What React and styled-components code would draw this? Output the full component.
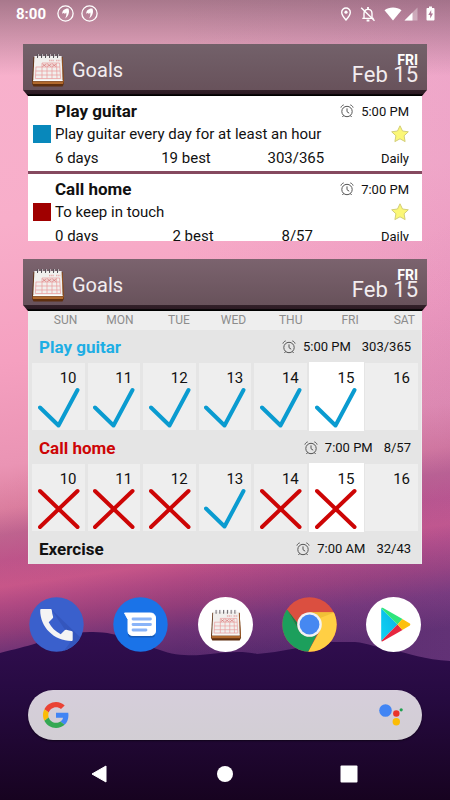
import styled, { createGlobalStyle } from 'styled-components';

const GlobalStyle = createGlobalStyle`
    * { box-sizing: border-box; }
    body {
        margin: 0;
        font-family: Roboto, sans-serif;
        color: #111;
    }
    button {
        border: 0;
        padding: 0;
        background: none;
        display: flex;
        cursor: pointer;
    }
    svg { display: block; flex: none; }
`;

const Screen = styled.div`
    position: relative;
    z-index: 0;
    display: flex;
    flex-direction: column;
    min-height: 100vh;
    overflow: hidden;
    background:
        linear-gradient(to bottom, rgba(60, 40, 50, 0.42) 0, rgba(60, 40, 50, 0) 76px),
        linear-gradient(150deg, rgba(130, 50, 140, 0) 45%, rgba(120, 40, 130, 0.12) 75%),
        linear-gradient(to right, rgba(190, 120, 190, 0) 40%, rgba(190, 120, 190, 0.16) 100%),
        linear-gradient(172deg, #f7b2cd 0%, #f8aeca 26%, #f5a0c0 42%, #ea94b4 54%, #dc7f9f 59%, #c0648f 62%, #c0568a 65%, #cb5889 68%, #b54c83 70%, #953f79 73%, #6c3374 76%, #4d2666 80%);
`;

const Hills = styled.svg`
    position: absolute;
    z-index: -1;
    left: 0;
    bottom: 0;
    width: 100%;
    height: 200px;
`;

const StatusBar = styled.header`
    display: flex;
    align-items: center;
    justify-content: space-between;
    height: 27px;
    padding: 0 15px 0 16px;
    color: white;
    font-size: 15px;
    font-weight: 700;
`;

const StatusGroup = styled.div`
    display: flex;
    align-items: center;
    gap: ${props => props.gap || "8px"};
`;

const Widgets = styled.main`
    display: flex;
    flex-direction: column;
    gap: 18px;
    padding: 17px 23px 0;
`;

const WidgetTop = styled.div`
    display: flex;
    align-items: center;
    height: 46px;
    padding: 6px 9px 0 8px;
    color: #f2ecef;
    background: linear-gradient(to bottom, ${props => props.shade || "#73616a"}, #68525b);
`;

const WidgetEdge = styled.div`
    height: 6px;
    background: linear-gradient(to bottom, #33212a 0, #2d1b24 60%, #000 80%);
    clip-path: polygon(0 0, 100% 0, calc(100% - 5px) 100%, 5px 100%);
`;

const WidgetTitle = styled.h2`
    flex: 1;
    margin: 0 0 0 7px;
    font-size: 20px;
    font-weight: 400;
    line-height: 24px;
`;

const Today = styled.div`
    display: flex;
    flex-direction: column;
    align-items: flex-end;
    padding-bottom: 2px;
    font-size: 22px;
    line-height: 18px;
`;

const Weekday = styled.strong`
    font-size: 14px;
    line-height: 12px;
    color: white;
`;

const GoalList = styled.ul`
    height: 145px;
    margin: 0 5px;
    padding: 0;
    overflow: hidden;
    list-style: none;
    background: white;
`;

const Goal = styled.li`
    display: grid;
    grid-template-columns: 18px 1fr auto;
    grid-template-rows: 24px 22px 26px;
    column-gap: 4px;
    align-items: center;
    height: 78px;
    padding: 3px 13px 0 5px;
    border-bottom: 3px solid #85495f;
`;

const GoalName = styled.h3`
    grid-column: 2;
    margin: 0;
    font-size: 17px;
    font-weight: 700;
    line-height: 24px;
`;

const Swatch = styled.span`
    grid-column: 1;
    width: 18px;
    height: 18px;
    background: ${props => props.color};
`;

const Note = styled.span`
    font-size: 15px;
    line-height: 20px;
    white-space: nowrap;
`;

const StarCell = styled.span`
    justify-self: end;
`;

const Reminder = styled.span`
    display: flex;
    align-items: center;
    gap: 7px;
    font-size: 13px;
    font-weight: 400;
    color: #111;
`;

const Stats = styled.div`
    grid-column: 2 / 4;
    display: flex;
    align-items: baseline;
    justify-content: space-between;
    font-size: 15px;
`;

const Streak = styled.span`
    margin-right: 6px;
`;

const Repeat = styled.span`
    font-size: 13px;
`;

const CalendarBox = styled.div`
    margin: 0 5px;
    background: #e5e5e5;
`;

const DayNames = styled.div`
    display: grid;
    grid-template-columns: repeat(7, 1fr);
    height: 19px;
    line-height: 18px;
    background: #eeeeee;
`;

const DayName = styled.span`
    padding-right: 7px;
    text-align: right;
    font-size: 12px;
    color: #8c8c8c;
`;

const CalendarBody = styled.div`
    padding: 0 1px 0 2px;
    border: solid #ededed;
    border-width: 0 1px;
`;

const Calendar = styled.table`
    width: 100%;
    border-collapse: collapse;
    table-layout: fixed;
`;

const GroupHead = styled.th`
    height: 32px;
    padding: 2px 9px 0 8px;
    text-align: left;
    font-weight: 700;
    color: ${props => props.color};
`;

const GroupLine = styled.div`
    display: flex;
    align-items: center;
    justify-content: space-between;
    font-size: 17px;
    line-height: 24px;
`;

const GroupMeta = styled.span`
    display: flex;
    align-items: center;
    gap: 11px;
    font-size: 13px;
    font-weight: 400;
    color: #111;
`;

const Day = styled.td`
    height: 69px;
    padding: ${props => props.$today ? "0" : "1px"};
`;

const DayBox = styled.div`
    display: flex;
    flex-direction: column;
    align-items: flex-end;
    height: ${props => props.$today ? "69px" : "67px"};
    padding: ${props => props.$today ? "7px 7px 0 0" : "6px 5px 0 0"};
    font-size: 15px;
    line-height: 18px;
    background: ${props => props.$today ? "white" : "#eeeeee"};
    border: solid #e5e5e5;
    border-width: ${props => props.$today ? "0" : "0 1px 0 0"};
`;

const DayNumber = styled.span`
    padding-right: 3px;
`;

const Dock = styled.nav`
    display: flex;
    justify-content: space-between;
    padding: 33px 29px 0;
`;

const SearchBar = styled.form`
    display: flex;
    align-items: center;
    height: 50px;
    margin: 38px 28px 0;
    padding: 0 18px 0 15px;
    border-radius: 25px;
    background: linear-gradient(to bottom, #d6cedb, #d2ced4);
    box-shadow: 0 1px 2px rgba(0, 0, 0, 0.5);
`;

const SearchInput = styled.input`
    flex: 1;
    min-width: 0;
    border: 0;
    outline: 0;
    background: none;
    font: 16px Roboto, sans-serif;
`;

const NavBar = styled.nav`
    display: flex;
    align-items: center;
    justify-content: space-between;
    padding: 25px 92px 16px 91px;
`;

function QuillIcon() {
    return (
        <svg width="17" height="17" viewBox="0 0 17 17">
            <circle cx="8.5" cy="8.5" r="7.6" fill="none" stroke="white" strokeWidth="1.3" />
            <path d="M5.300 8.800C4.900 5.600 7.800 3.200 11.400 3.500 12.800 6.600 12 10.700 8 13.500 9.300 11.200 9.700 9.100 9.200 7.400L7.700 9.200 7.200 7.700z" fill="white" />
        </svg>
    );
}

function PinIcon() {
    return (
        <svg width="12" height="14" viewBox="0 0 12 14">
            <path d="M6 1a4.300 4.300 0 0 0-4.300 4.300C1.700 8.400 6 13 6 13s4.300-4.600 4.300-7.700A4.300 4.300 0 0 0 6 1z" fill="none" stroke="white" strokeWidth="1.4" />
            <circle cx="6" cy="5.2" r="1.6" fill="white" />
        </svg>
    );
}

function BellOffIcon() {
    return (
        <svg width="16" height="16" viewBox="0 0 16 16" fill="none" stroke="white" strokeWidth="1.4">
            <path d="M4 12.300V7.500C4 5 5.500 3.400 8 3.400s4 1.600 4 4.100v4.800M2.300 12.400h11.400" />
            <path d="M8 1v2M6.600 14.500h2.800" strokeWidth="1.8" />
            <path d="M1.200 1.800l13.300 13" />
        </svg>
    );
}

function WifiIcon() {
    return (
        <svg width="18" height="14" viewBox="0 0 18 14">
            <path d="M9 13.500L.5 3.200C2.800 1.400 5.800.5 9 .5s6.200.9 8.500 2.700z" fill="white" />
        </svg>
    );
}

function SignalIcon() {
    return (
        <svg width="14" height="14" viewBox="0 0 14 14">
            <path d="M13.500.5v13H.5z" fill="rgba(255,255,255,.35)" />
            <path d="M8.500 5.500v8h-8z" fill="white" />
        </svg>
    );
}

function BatteryIcon() {
    return (
        <svg width="9" height="15" viewBox="0 0 9 15">
            <path d="M3 .5h3v1.500h1.500c.5 0 1 .4 1 1V13.500c0 .5-.4 1-1 1h-6c-.6 0-1-.5-1-1V3c0-.6.500-1 1-1H3z" fill="white" />
            <path d="M5.200 4L2.300 9h1.900v3.500L7 7.400H5.200z" fill="#b07896" />
        </svg>
    );
}

function CalendarIcon({ size }) {
    return (
        <svg width={size} height={size} viewBox="0 0 34 34">
            <path d="M2.500 4H31.500L33 30.500 31.500 33.500H2.500L1 30.500z" fill="#5e2f10" />
            <path d="M1.500 28.500h31l-.3 2.500H1.800z" fill="#b0692e" />
            <path d="M30.500 4.500h1l1.300 24.500h-1z" fill="#9c5722" />
            <path d="M3.400 3h27.200L31.600 28H2.200z" fill="#f1efed" />
            <path d="M2.200 27.600h29.300" stroke="#fff" strokeWidth="1" />
            <g stroke="#ea9a9a" strokeWidth=".7" fill="none">
                <path d="M4.800 14h24M4.600 18h24.500M4.400 22h25M4.400 25.500h25.200M5 14L4.400 25.500M11 10v15.500M16 10v15.500M21 10v15.500M25.500 10L26 25.500M28.600 10l1 15.500M11 10h17.600" />
            </g>
            <path d="M11.500 11l3.500 2.500m0-2.500l-3.500 2.500m5-2.500l3.500 2.500m0-2.500l-3.500 2.500m5-2.500l3.500 2.500m0-2.500l-3.500 2.500" stroke="#d87878" strokeWidth=".8" />
            <path d="M18 7.500h5m2 0h4.500" stroke="#e6b0b0" strokeWidth="1.500" strokeDasharray="1.500 .6" />
            <path d="M6.500 1v4M10.500 1v4M14.500 1v4M18.500 1v4M22.500 1v4M26.500 1v4" stroke="#555157" strokeWidth="1" />
            <path d="M7.500 1v3M11.500 1v3M15.500 1v3M19.500 1v3M23.500 1v3M27.500 1v3" stroke="#d8d2d6" strokeWidth=".7" />
        </svg>
    );
}

function AlarmIcon() {
    return (
        <svg width="14" height="14" viewBox="0 0 14 14" fill="none" stroke="#555" strokeWidth="1">
            <circle cx="7" cy="7.500" r="5.200" />
            <path d="M7 4.400v3.300l2.200 1.500M.9 3.600C1.300 2.300 2.300 1.300 3.700.9M13.100 3.600C12.700 2.300 11.700 1.300 10.300.9M3.500 11.500l-1 1.500M10.500 11.500l1 1.500" />
        </svg>
    );
}

function StarIcon() {
    return (
        <svg width="18" height="18" viewBox="0 0 18 18">
            <path d="M9 .8l2.500 5.200 5.800.8-4.200 4 1 5.800L9 13.800l-5.100 2.800 1-5.800-4.200-4 5.800-.8z" fill="#fbf777" stroke="#d3ce78" strokeWidth="1" strokeLinejoin="round" />
        </svg>
    );
}

function Mark({ type }) {
    const done = type === "done";
    return (
        <svg width="42" height="42" viewBox="0 0 42 42" fill="none" stroke={done ? "#0a9bd0" : "#cd0505"} strokeWidth="4" strokeLinecap="round" strokeLinejoin="round">
            <path d={done ? "M2 20.500L20.500 38.500 39.500 3" : "M2 3L39.500 39M39.500 3L2 39"} />
        </svg>
    );
}

function PhoneIcon() {
    return (
        <svg width="55" height="55" viewBox="0 0 55 55">
            <defs>
                <clipPath id="phoneClip"><circle cx="27.500" cy="27.500" r="27.200" /></clipPath>
            </defs>
            <circle cx="27.500" cy="27.500" r="27.200" fill="#3a60cc" />
            <path d="M22 12l33 32v11H34L43 43z" fill="#3456bd" clipPath="url(#phoneClip)" />
            <path d="M12.500 12h9c.7 0 1.200.5 1.300 1.200.2 2.300.6 4.500 1.300 6.500.2.600 0 1.200-.4 1.600l-4 4c2.900 5.500 6.500 9 12 11.900l4-4c.4-.4 1-.6 1.600-.4 2 .7 3.600 1 5.200 1.200.7.100 1.200.6 1.200 1.300v7.400c0 .8-.5 1.300-1.200 1.300C25 44 11 30 11.200 13.300c0-.8.5-1.300 1.300-1.300z" fill="#f4f4f4" />
        </svg>
    );
}

function MessagesIcon() {
    return (
        <svg width="55" height="55" viewBox="0 0 55 55">
            <circle cx="27.500" cy="27.500" r="27.200" fill="#1a73e8" />
            <path d="M15 37c0 2 1 3.500 3 3.500h21c2 0 3-1 3-4z" fill="#155bb9" />
            <path d="M11.500 16h26c3 0 5 2 5 5v13c0 3-2 4.500-5 4.500H20c-3 0-5-1.500-5-4.500V22.500z" fill="white" stroke="white" strokeLinejoin="round" />
            <path d="M20 22h17.500M20 27.500h17.500M20 33h13" stroke="#8ab4f8" strokeWidth="2.800" strokeLinecap="round" />
        </svg>
    );
}

function GoalsIcon() {
    return (
        <svg width="55" height="55" viewBox="0 0 55 55">
            <circle cx="27.500" cy="27.500" r="27.500" fill="white" />
            <g transform="translate(12 12)"><CalendarIcon size={32} /></g>
        </svg>
    );
}

function ChromeIcon() {
    return (
        <svg width="55" height="55" viewBox="0 0 55 55">
            <defs>
                <clipPath id="chromeClip"><circle cx="27.500" cy="27.500" r="27.200" /></clipPath>
            </defs>
            <g clipPath="url(#chromeClip)">
                <rect width="55" height="55" fill="#db4f40" />
                <path d="M27.500 15.200H55V55H26L38 33.500z" fill="#ffcf44" />
                <path d="M5.500 13L17 33.600c2.200 3.600 6 6 10.500 6 3.500 0 6-1.400 8-3.200L26 55H0V13z" fill="#1c9f5c" />
                <path d="M5.500 13L17 33.500 15.500 26z" fill="#12854a" />
                <path d="M27.500 15.200H53L38 21z" fill="#e8b52f" opacity=".6" />
            </g>
            <circle cx="27.500" cy="27.500" r="12.300" fill="#f3f3f3" />
            <circle cx="27.500" cy="27.500" r="9.900" fill="#4688f1" />
        </svg>
    );
}

function PlayIcon() {
    return (
        <svg width="55" height="55" viewBox="0 0 55 55">
            <defs>
                <linearGradient id="playBlue" x1="0" y1="1" x2="1" y2="0">
                    <stop offset="0" stopColor="#10d3f5" />
                    <stop offset="1" stopColor="#08b2e3" />
                </linearGradient>
            </defs>
            <circle cx="27.500" cy="27.500" r="27.500" fill="white" />
            <path d="M15.200 11.200L31.500 27.500 15.200 44z" fill="url(#playBlue)" />
            <path d="M15.200 11.200c.6-.7 1.300-.5 2-.1L36.500 22l-5 5.500z" fill="#2ee57c" />
            <path d="M15.200 44c.6.700 1.300.500 2 .1L36.500 33l-5-5.500z" fill="#e6273f" />
            <path d="M36.300 22l7.200 4.300c1.100.7 1.100 1.700 0 2.400L36.300 33l-4.800-5.500z" fill="#fdc00d" />
        </svg>
    );
}

function GoogleIcon() {
    return (
        <svg width="26" height="26" viewBox="0 0 48 48">
            <path fill="#EA4335" d="M24 9.500c3.540 0 6.710 1.220 9.210 3.600l6.850-6.850C35.900 2.380 30.470 0 24 0 14.620 0 6.510 5.380 2.560 13.220l7.980 6.190C12.430 13.720 17.740 9.500 24 9.500z" />
            <path fill="#4285F4" d="M46.980 24.550c0-1.570-.15-3.090-.38-4.550H24v9.020h12.940c-.58 2.960-2.260 5.480-4.780 7.180l7.730 6c4.510-4.180 7.090-10.360 7.090-17.650z" />
            <path fill="#FBBC05" d="M10.530 28.590c-.48-1.450-.76-2.990-.76-4.590s.27-3.140.76-4.590l-7.980-6.190C.92 16.460 0 20.120 0 24c0 3.880.92 7.540 2.560 10.780l7.970-6.190z" />
            <path fill="#34A853" d="M24 48c6.480 0 11.930-2.130 15.890-5.810l-7.730-6c-2.150 1.450-4.920 2.300-8.160 2.300-6.260 0-11.570-4.220-13.470-9.910l-7.980 6.190C6.510 42.620 14.620 48 24 48z" />
        </svg>
    );
}

function AssistantIcon() {
    return (
        <svg width="26" height="26" viewBox="0 0 26 26">
            <circle cx="7.500" cy="8.500" r="6.300" fill="#4285f4" />
            <circle cx="18.300" cy="11.500" r="3.200" fill="#ea3329" />
            <circle cx="23.200" cy="7.800" r="1.600" fill="#1fa050" />
            <circle cx="18.300" cy="19.700" r="3.700" fill="#fbbc05" />
        </svg>
    );
}

const days = ["SUN", "MON", "TUE", "WED", "THU", "FRI", "SAT"];

const goals = [
    { name: "Play guitar", note: "Play guitar every day for at least an hour", color: "#0888bb", time: "5:00 PM", streak: "6 days", best: "19 best", total: "303/365" },
    { name: "Call home", note: "To keep in touch", color: "#a00000", time: "7:00 PM", streak: "0 days", best: "2 best", total: "8/57" },
];

const groups = [
    { name: "Play guitar", color: "#1eaee4", time: "5:00 PM", total: "303/365", marks: ["done", "done", "done", "done", "done", "done", null] },
    { name: "Call home", color: "#cd0505", time: "7:00 PM", total: "8/57", marks: ["missed", "missed", "missed", "done", "missed", "missed", null] },
    { name: "Exercise", color: "#111", time: "7:00 AM", total: "32/43", marks: null },
];

const apps = [
    { name: "Phone", Icon: PhoneIcon },
    { name: "Messages", Icon: MessagesIcon },
    { name: "Goals", Icon: GoalsIcon },
    { name: "Chrome", Icon: ChromeIcon },
    { name: "Play Store", Icon: PlayIcon },
];

function Widget({ shade, children }) {
    return (
        <section>
            <WidgetTop shade={shade}>
                <CalendarIcon size={34} />
                <WidgetTitle>Goals</WidgetTitle>
                <Today>
                    <Weekday>FRI</Weekday>
                    <span>Feb 15</span>
                </Today>
            </WidgetTop>
            <WidgetEdge />
            {children}
        </section>
    );
}

function GoalRow({ goal }) {
    return (
        <Goal>
            <GoalName>{goal.name}</GoalName>
            <Reminder><AlarmIcon />{goal.time}</Reminder>
            <Swatch color={goal.color} />
            <Note>{goal.note}</Note>
            <StarCell><StarIcon /></StarCell>
            <Stats>
                <Streak>{goal.streak}</Streak>
                <span>{goal.best}</span>
                <span>{goal.total}</span>
                <Repeat>Daily</Repeat>
            </Stats>
        </Goal>
    );
}

function CalendarGroup({ group }) {
    return (
        <tbody>
            <tr>
                <GroupHead colSpan={7} color={group.color}>
                    <GroupLine>
                        {group.name}
                        <GroupMeta>
                            <Reminder><AlarmIcon />{group.time}</Reminder>
                            <span>{group.total}</span>
                        </GroupMeta>
                    </GroupLine>
                </GroupHead>
            </tr>
            {group.marks && (
                <tr>
                    {group.marks.map((mark, i) => (
                        <Day key={i} $today={i === 5}>
                            <DayBox $today={i === 5}>
                                <DayNumber>{10 + i}</DayNumber>
                                {mark && <Mark type={mark} />}
                            </DayBox>
                        </Day>
                    ))}
                </tr>
            )}
        </tbody>
    );
}

export default function App() {
    return (
        <Screen>
            <GlobalStyle />
            <Hills viewBox="0 0 450 200" preserveAspectRatio="none">
                <defs>
                    <linearGradient id="hill" x1="0" y1="0" x2="0" y2="1">
                        <stop offset="0" stopColor="#310e50" />
                        <stop offset=".4" stopColor="#260a40" />
                        <stop offset="1" stopColor="#170320" />
                    </linearGradient>
                </defs>
                <path d="M0 53C15 49 25 47 37 43C55 38 72 32 90 32C118 31 138 43 160 50C172 55 190 56 200 55C222 53 240 50 257 54C270 53 280 51 292 49C310 46 320 42 332 42H355C368 43 378 48 392 50C408 53 425 60 450 61V200H0z" fill="url(#hill)" />
                <path d="M132 110C150 107 170 102 184 98C170 105 150 109 132 110z" fill="#3d1757" />
            </Hills>
            <StatusBar>
                <StatusGroup gap="11px">
                    8:00
                    <StatusGroup gap="7px"><QuillIcon /><QuillIcon /></StatusGroup>
                </StatusGroup>
                <StatusGroup>
                    <PinIcon />
                    <BellOffIcon />
                    <StatusGroup gap="2px"><WifiIcon /><SignalIcon /></StatusGroup>
                    <BatteryIcon />
                </StatusGroup>
            </StatusBar>
            <Widgets>
                <Widget>
                    <GoalList>
                        {goals.map(goal => <GoalRow key={goal.name} goal={goal} />)}
                    </GoalList>
                </Widget>
                <Widget shade="#7b636e">
                    <CalendarBox>
                        <DayNames>
                            {days.map(day => <DayName key={day}>{day}</DayName>)}
                        </DayNames>
                        <CalendarBody>
                            <Calendar>
                                {groups.map(group => <CalendarGroup key={group.name} group={group} />)}
                            </Calendar>
                        </CalendarBody>
                    </CalendarBox>
                </Widget>
            </Widgets>
            <Dock>
                {apps.map(({ name, Icon }) => (
                    <button key={name} type="button" aria-label={name}><Icon /></button>
                ))}
            </Dock>
            <SearchBar role="search">
                <GoogleIcon />
                <SearchInput type="text" aria-label="Search" />
                <button type="button" aria-label="Assistant"><AssistantIcon /></button>
            </SearchBar>
            <NavBar>
                <button type="button" aria-label="Back">
                    <svg width="18" height="18" viewBox="0 0 18 18"><path d="M15 1L1 9l14 8z" fill="white" stroke="white" strokeLinejoin="round" /></svg>
                </button>
                <button type="button" aria-label="Home">
                    <svg width="18" height="18" viewBox="0 0 18 18"><circle cx="9" cy="9" r="8" fill="white" /></svg>
                </button>
                <button type="button" aria-label="Recent apps">
                    <svg width="18" height="18" viewBox="0 0 18 18"><rect x=".5" y=".5" width="17" height="17" rx="1" fill="white" /></svg>
                </button>
            </NavBar>
        </Screen>
    );
}
